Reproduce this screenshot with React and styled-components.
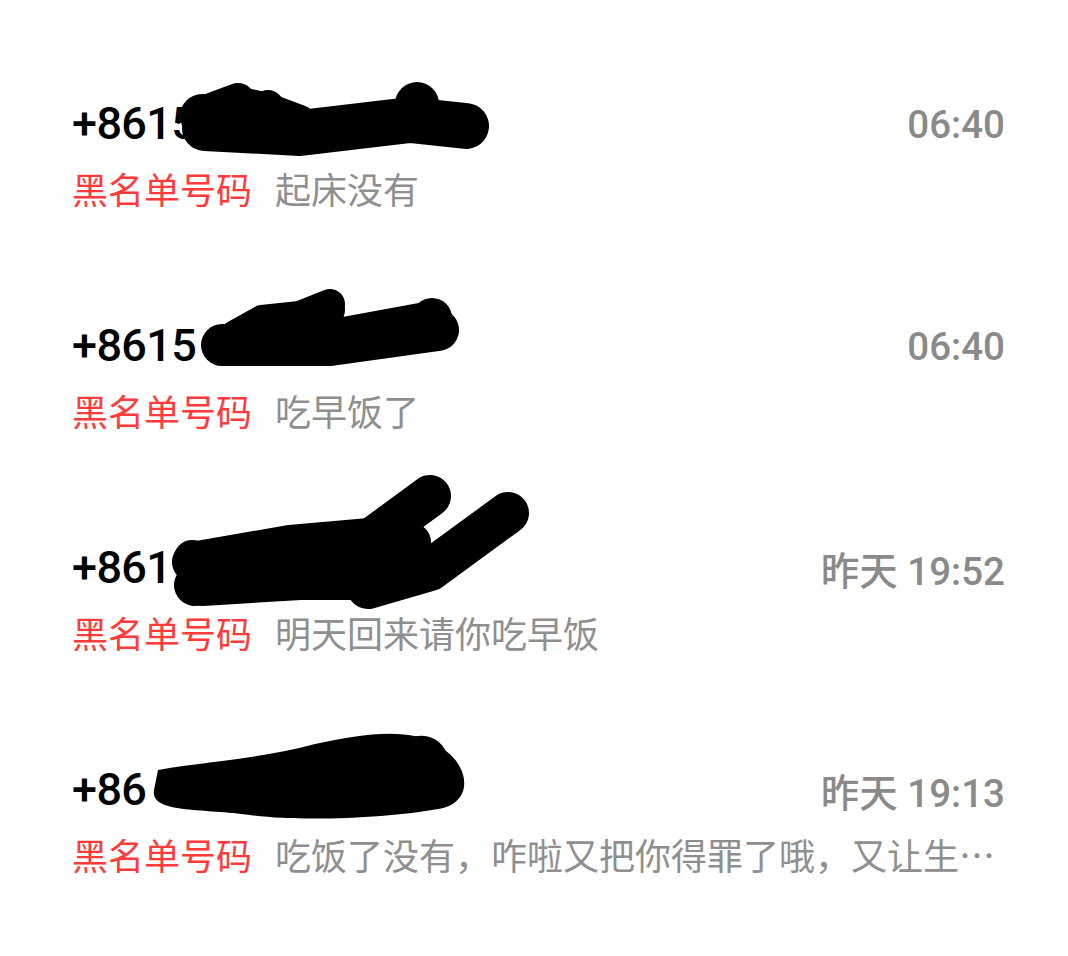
import React from "react";
import styled, { createGlobalStyle } from "styled-components";

const Global = createGlobalStyle`
  html, body { margin: 0; padding: 0; background: #ffffff; }
  body { font-family: Roboto, "Noto Sans CJK SC", sans-serif; }
`;

const List = styled.div`
  width: 1068px;
  height: 956px;
  box-sizing: border-box;
  padding: 96px 63px 0 72px;
  display: flex;
  flex-direction: column;
  background: #fff;
  overflow: hidden;
`;

const Row = styled.div`
  height: 222px;
  display: flex;
  flex-direction: column;
  flex-shrink: 0;
`;

const TopLine = styled.div`
  height: 56px;
  display: flex;
  align-items: center;
  justify-content: space-between;
`;

const NameWrap = styled.div`
  position: relative;
  height: 56px;
  display: flex;
  align-items: center;
`;

const Name = styled.span`
  font-family: Roboto, "Noto Sans CJK SC", sans-serif;
  font-size: 45px;
  font-weight: 500;
  letter-spacing: -0.6px;
  color: #000;
  line-height: 56px;
`;

const Scribble = styled.svg`
  position: absolute;
  left: -72px;
  top: -96px;
  width: 600px;
  height: 240px;
  overflow: visible;
  pointer-events: none;
`;

const Time = styled.span`
  font-family: Roboto, "Noto Sans CJK SC", sans-serif;
  font-size: 38.5px;
  font-weight: 500;
  color: #8a8a8a;
  white-space: nowrap;
`;

const SubLine = styled.div`
  margin-top: 11px;
  height: 50px;
  display: flex;
  align-items: center;
  min-width: 0;
  font-family: "Noto Sans CJK SC", sans-serif;
  font-size: 36px;
  line-height: 50px;
`;

const Tag = styled.span`
  color: #ff3b3b;
  flex-shrink: 0;
  margin-right: 23px;
`;

const Preview = styled.span`
  color: #8f8f8f;
  white-space: nowrap;
  overflow: hidden;
  text-overflow: ellipsis;
  min-width: 0;
  flex: 1;
`;

const ink = { fill: "none", stroke: "#000", strokeLinecap: "round", strokeLinejoin: "round" };

const scribbles = [
  (
    <g>
      <path {...ink} strokeWidth="46" d="M205,128 L300,133 L410,120 L466,126" />
      <path {...ink} strokeWidth="30" d="M200,112 L232,100 L268,108 L300,120" />
      <circle cx="202" cy="116" r="22" />
      <circle cx="238" cy="100" r="17" />
      <circle cx="268" cy="106" r="16" />
      <circle cx="417" cy="104" r="22" />
      <circle cx="300" cy="124" r="14" />
    </g>
  ),
  (
    <g>
      <path {...ink} strokeWidth="42" d="M222,345 L330,345 L438,330" />
      <path {...ink} strokeWidth="30" d="M235,335 L262,320 L300,316 L330,304 L322,336 L420,318" />
      <circle cx="222" cy="345" r="20" />
      <circle cx="262" cy="322" r="16" />
      <circle cx="328" cy="310" r="17" />
      <circle cx="432" cy="318" r="20" />
      <circle cx="440" cy="333" r="16" />
    </g>
  ),
  (
    <g>
      <path {...ink} strokeWidth="42" d="M195,585 L300,562 L370,540 L430,496" />
      <path {...ink} strokeWidth="40" d="M192,562 L290,545 L370,538" />
      <path {...ink} strokeWidth="42" d="M368,588 L430,570 L508,513" />
      <path {...ink} strokeWidth="38" d="M370,582 L412,542" />
      <path {...ink} strokeWidth="40" d="M202,586 L300,580 L380,580" />
      <circle cx="192" cy="558" r="18" />
    </g>
  ),
  (
    <g>
      <path
        fill="#000"
        d="M158,770 C200,762 255,760 315,744 C365,733 412,727 438,746 C472,764 474,804 438,809 C390,818 300,822 250,815 C205,808 150,814 154,790 Z"
      />
      <path fill="#000" d="M402,742 C418,730 440,736 446,752 C448,768 430,772 416,766 Z" />
    </g>
  ),
];

const rows = [
  { name: "+8615", time: "06:40", text: "起床没有" },
  { name: "+8615", time: "06:40", text: "吃早饭了" },
  { name: "+861", time: "昨天 19:52", text: "明天回来请你吃早饭" },
  { name: "+86", time: "昨天 19:13", text: "吃饭了没有，咋啦又把你得罪了哦，又让生…" },
];

export default function App() {
  return (
    <>
      <Global />
      <List>
        {rows.map((r, i) => (
          <Row key={i}>
            <TopLine>
              <NameWrap>
                <Name>{r.name}</Name>
                <Scribble viewBox="0 0 600 240">
                  <g transform={`translate(0,${-222 * i})`}>{scribbles[i]}</g>
                </Scribble>
              </NameWrap>
              <Time>{r.time}</Time>
            </TopLine>
            <SubLine>
              <Tag>黑名单号码</Tag>
              <Preview>{r.text}</Preview>
            </SubLine>
          </Row>
        ))}
      </List>
    </>
  );
}
